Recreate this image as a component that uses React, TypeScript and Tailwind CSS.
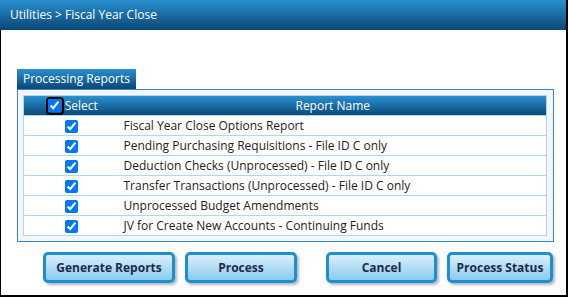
import React from 'react'

const reports = [
  'Fiscal Year Close Options Report',
  'Pending Purchasing Requisitions - File ID C only',
  'Deduction Checks (Unprocessed) - File ID C only',
  'Transfer Transactions (Unprocessed) - File ID C only',
  'Unprocessed Budget Amendments',
  'JV for Create New Accounts - Continuing Funds',
]

const btn =
  'h-[31px] rounded-[5px] border-[3px] border-[#1b8fcf] bg-gradient-to-b from-[#d9effb] to-[#8ccbef] text-[12px] font-bold text-[#1b2b4b] shadow-[2px_2px_3px_rgba(0,0,0,0.3)]'

export default function App() {
  return (
    <div
      className="w-[568px] h-[297px] bg-white border-r-2 border-b-2 border-black overflow-hidden"
      style={{ fontFamily: '"Open Sans", "Noto Sans", sans-serif' }}
    >
      <div className="h-[30px] bg-gradient-to-b from-[#2a91d2] to-[#0a4775] flex items-center pl-[10px] text-white text-[12px]">
        Utilities &gt; Fiscal Year Close
      </div>
      <div className="h-[267px] border-l border-black pl-4 pt-[39px]">
        <div className="w-[119px] h-[20px] bg-gradient-to-b from-[#2a91d2] to-[#0a4775] text-white text-[12px] whitespace-nowrap flex items-center pl-[6px]">
          Processing Reports
        </div>
        <div className="w-[537px] border border-[#2d8ccb] bg-[#f4f6fb] p-[5px]">
          <table className="w-[524px] border-collapse border border-[#add8f0] text-[12px] text-[#222]">
            <thead>
              <tr className="h-[20px] bg-gradient-to-b from-[#2a91d2] to-[#0a4775] text-white">
                <th className="w-[96px] p-0 font-normal">
                  <div className="flex items-center justify-center">
                    <span className="w-[18px] h-[18px] border-2 border-black rounded-[4px] flex items-center justify-center -my-[1px]">
                      <input type="checkbox" defaultChecked className="w-[13px] h-[13px] m-0" />
                    </span>
                    <span className="ml-[1px]">Select</span>
                  </div>
                </th>
                <th className="p-0 font-normal">Report Name</th>
              </tr>
            </thead>
            <tbody>
              {reports.map((r) => (
                <tr key={r} className="h-[20px] bg-white border-t border-[#add8f0]">
                  <td className="p-0 text-center">
                    <input type="checkbox" defaultChecked className="w-[13px] h-[13px] m-0 align-middle" />
                  </td>
                  <td className="p-0 pl-[4px]">{r}</td>
                </tr>
              ))}
            </tbody>
          </table>
        </div>
        <div className="flex mt-[10px]">
          <button className={`${btn} ml-[26px] w-[132px]`}>Generate Reports</button>
          <button className={`${btn} ml-[10px] w-[112px]`}>Process</button>
          <button className={`${btn} ml-[29px] w-[111px]`}>Cancel</button>
          <button className={`${btn} ml-[10px] w-[106px]`}>Process Status</button>
        </div>
      </div>
    </div>
  )
}
